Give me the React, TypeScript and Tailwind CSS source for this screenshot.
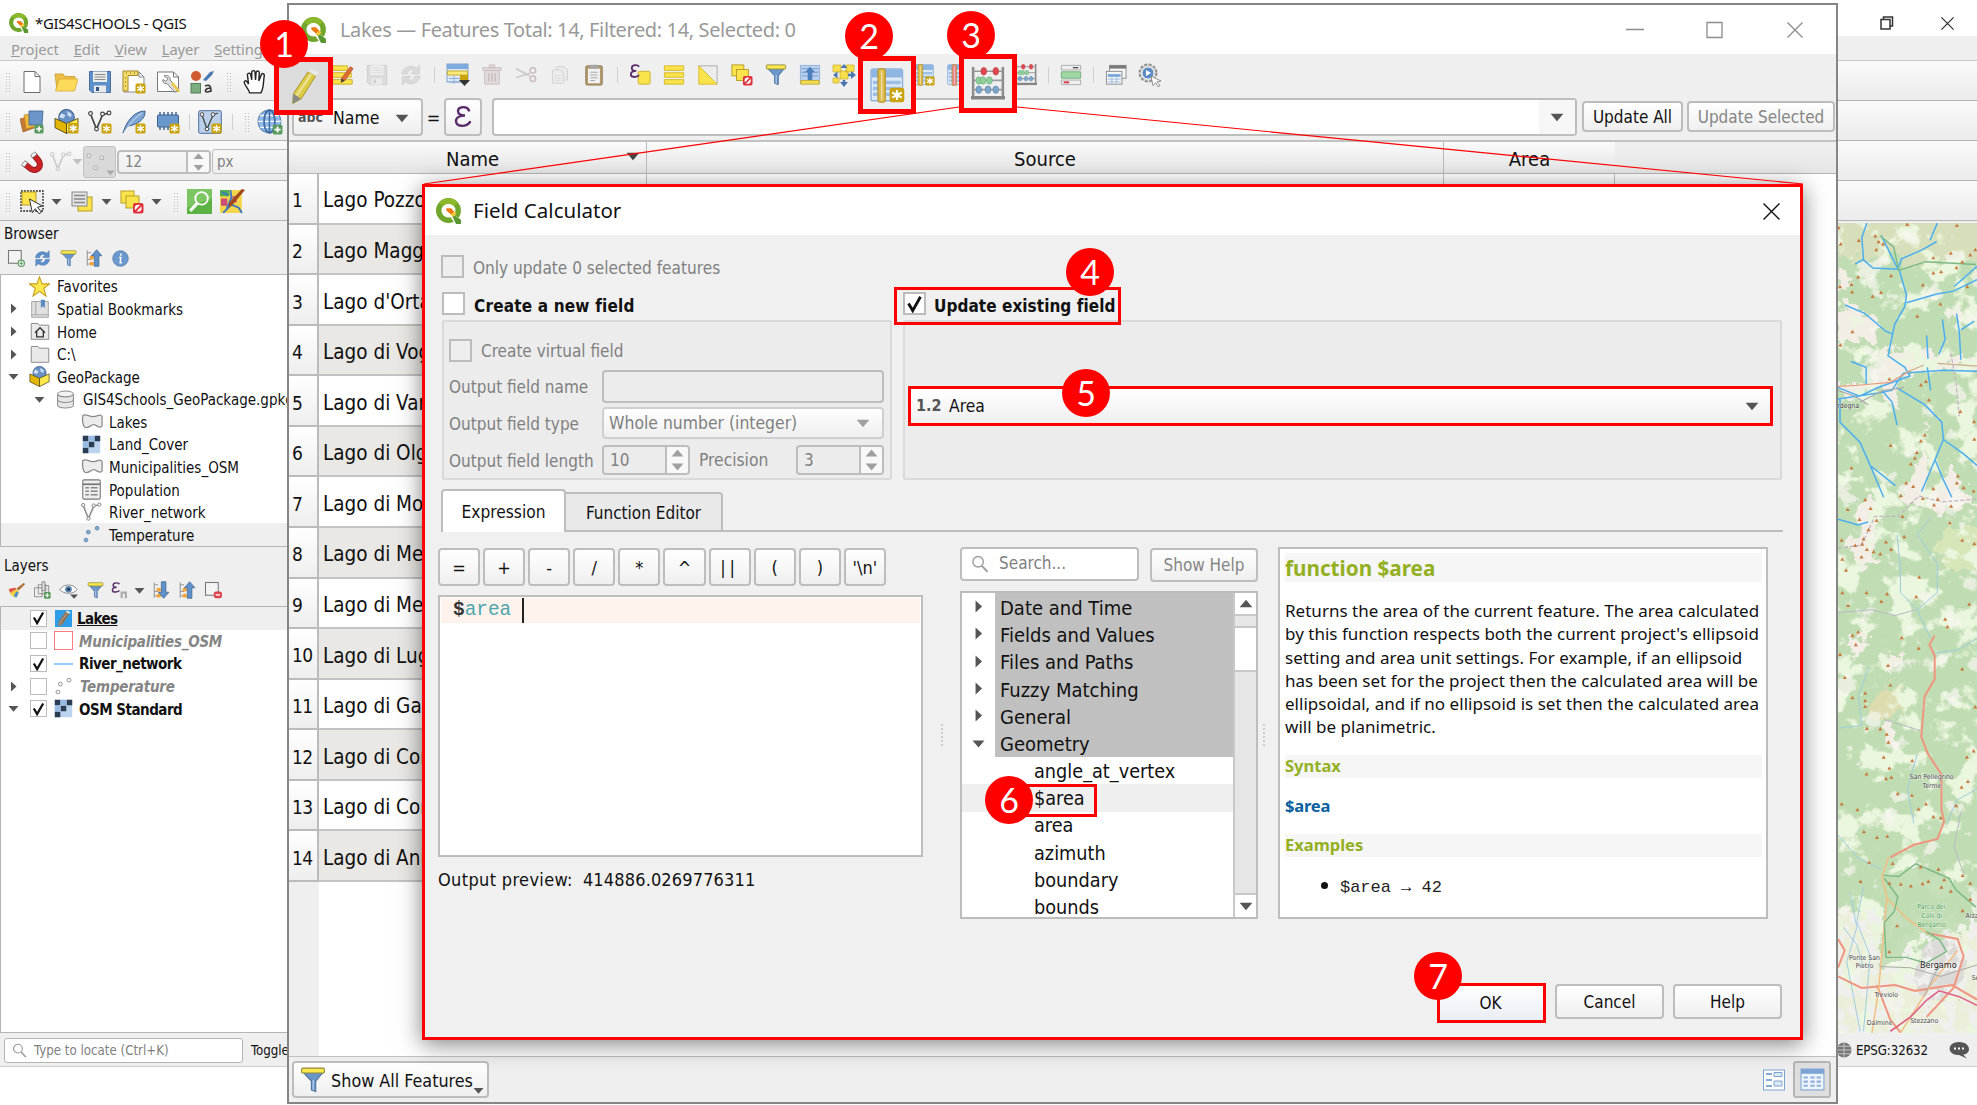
import React from "react";

type P = { children?: React.ReactNode; className?: string };
type IconProps = { s?: number };

const Svg = ({ s = 24, children }: { s?: number; children: React.ReactNode }) => (
  <svg width={s} height={s} viewBox="0 0 24 24" fill="none" className="shrink-0">
    {children}
  </svg>
);

/* ---------- shared drawings ---------- */

const QLogo = ({ s = 26 }: IconProps) => (
  <Svg s={s}>
    <circle cx="11.5" cy="11.5" r="9" stroke="#6fa62b" strokeWidth="5" />
    <path d="M4.6 6A9 9 0 0 1 18.5 6" stroke="#8cb82c" strokeWidth="5" />
    <path d="M12.5 12.5l10.5 7.5v4h-5l-6-8z" fill="#fff" />
    <path d="M13.5 13.500l9.500 6.500v4h-4.500z" fill="#589632" />
    <path d="M9.500 9.500h4.500l3 3.500-3 2.500-4.500-4z" fill="#ee7913" />
    <path d="M13.500 15.500l3.500-3 2 1.800-3.200 3.200z" fill="#f3c93a" />
  </Svg>
);

const Tri = ({ dir = "down", color = "#555", s = 11 }: { dir?: "down" | "right" | "up"; color?: string; s?: number }) => (
  <svg width={s} height={s} viewBox="0 0 11 11" className="shrink-0" fill={color}>
    {dir === "down" && <path d="M.5 3h10L5.500 8.800z" />}
    {dir === "up" && <path d="M.5 8h10L5.500 2.200z" />}
    {dir === "right" && <path d="M3 .5v10l5.500-5z" />}
  </svg>
);

const Star = () => (
  <>
    <rect x="13.500" y="13.500" width="10" height="10" rx="1.500" fill="#c9a20c" />
    <path d="M18.500 15v7M15.200 16.800l6.600 3.500M21.800 16.800l-6.600 3.500" stroke="#fff" strokeWidth="1.500" />
  </>
);
const Plus = () => (
  <>
    <rect x="14.500" y="14.500" width="9" height="9" rx="1.500" fill="#5a9a5e" />
    <path d="M19 16.200v5.600M16.200 19h5.600" stroke="#fff" strokeWidth="1.600" />
  </>
);
const Funnel = ({ s = 22 }: IconProps) => (
  <Svg s={s}>
    <path d="M2 4h20l-7.500 9v9.500l-4-1.500v-8z" fill="#6b96c9" stroke="#48709e" />
    <path d="M11.500 12v9l1.500.6V12z" fill="#a9c4e4" />
    <rect x="1.500" y="1" width="21" height="4.500" rx="1" fill="#fbe84a" stroke="#8f8a3c" />
  </Svg>
);
const Refresh = ({ s = 20, c = "#5b8fcb", edge = "#4d78ab" }: IconProps & { c?: string; edge?: string }) => (
  <Svg s={s}>
    <path d="M2 11C3 3 12 0 18 4.500L21.500 1v9.500H12l3.300-3.300c-3-2-6.300-1-7.300 3.800z" fill={c} stroke={edge} strokeWidth=".7" />
    <path d="M22 13c-1 8-10 11-16 6.500L2.500 23v-9.500H12l-3.300 3.300c3 2 6.300 1 7.300-3.800z" fill={c} stroke={edge} strokeWidth=".7" />
  </Svg>
);
const BlueArrow = ({ up }: { up?: boolean }) => (
  <Svg s={18}>
    <path d="M3 2v20M3 5h5M3 14h5M3 20h5" stroke="#999" strokeWidth="1.500" />
    <rect x="6" y="9" width="6" height="5" rx="2" fill="#f2a53a" />
    <rect x="6" y="17" width="6" height="5" rx="2" fill="#f2a53a" />
    {up ? (
      <path d="M15.500 1l7 8h-4v14h-6V9h-4z" fill="#5f92cc" stroke="#3d638e" />
    ) : (
      <path d="M15.500 23l7-8h-4V1h-6v14h-4z" fill="#5f92cc" stroke="#3d638e" />
    )}
  </Svg>
);
const GeoPkg = ({ s = 22, star }: IconProps & { star?: boolean }) => (
  <Svg s={s}>
    <circle cx="12" cy="8" r="7.500" fill="#6991c6" stroke="#3e5f8c" />
    <path d="M7 4l4 2-2 3-4-1zM13 2l4 3-1 3-3-2z" fill="#cfe0f2" />
    <path d="M1 9l11 5v9.500L1 18z" fill="#e2b600" stroke="#4a3f14" strokeWidth=".8" />
    <path d="M23 9l-11 5v9.500L23 18z" fill="#fbe94c" stroke="#4a3f14" strokeWidth=".8" />
    {star && <Star />}
  </Svg>
);
const Raster = () => (
  <Svg s={19}>
    <rect x="1" y="1" width="22" height="22" fill="#bcd3ef" />
    <path d="M1 1h7v7H1zM16 1h7v7h-7zM8.500 8.500h7v7h-7zM1 16h7v7H1z" fill="#2b3d52" />
    <path d="M8.500 1h7v7h-7zM1 8.500h7v7H1z" fill="#98bbe4" />
  </Svg>
);
const Poly = () => (
  <Svg s={22}>
    <path d="M2 5c4-3 7 2 12 1 4 0 7-4 9 0v10c-1 3-5 1-8-1-4-1-6 4-10 3-3-1-4-9-3-13z" fill="#ececec" stroke="#8b8b8b" strokeWidth="1.400" />
  </Svg>
);
const VLine = ({ c = "#444", star, s = 24 }: IconProps & { c?: string; star?: boolean }) => (
  <Svg s={s}>
    <path d="M2.500 4l6 15 6-14 6-2" stroke={c} strokeWidth="1.700" />
    {[[2.500, 3.500], [8.500, 19], [14.500, 4], [21, 3]].map(([x, y]) => (
      <circle key={x} cx={x} cy={y} r="1.900" fill="#f2f2f2" stroke={c} strokeWidth="1.100" />
    ))}
    {star && <Star />}
  </Svg>
);
const Dots = ({ c, f }: { c: string; f: string }) => (
  <Svg s={19}>
    <circle cx="5" cy="19" r="2.400" fill={f} stroke={c} />
    <circle cx="8" cy="9" r="2.400" fill={f} stroke={c} />
    <circle cx="19" cy="4" r="2.400" fill={f} stroke={c} />
  </Svg>
);
const Magnify = ({ s = 18 }: IconProps) => (
  <Svg s={s}>
    <circle cx="9.500" cy="9" r="7" stroke="#999" strokeWidth="1.800" />
    <path d="M14.500 14.500l7.500 8" stroke="#999" strokeWidth="2.400" />
  </Svg>
);
const Pencil = ({ s = 24, body = "#dccb45" }: IconProps & { body?: string }) => (
  <Svg s={s}>
    <path d="M15 2.500l5 2.500-9.500 15-5.500 3 .5-6.500z" fill={body} stroke="#a58e22" strokeWidth=".6" />
    <path d="M17 4l-9.500 14" stroke="#fff" strokeOpacity=".45" strokeWidth="1.400" />
    <path d="M5.300 16.500l5 3.500L5 23z" fill="#8a8a8a" />
    <path d="M15 2.500l2-1.800 5 2.500-2 2z" fill="#e9e9e9" />
  </Svg>
);
const Abacus = ({ s = 24 }: IconProps) => (
  <Svg s={s}>
    <path d="M1.500 0v22M22.500 0v22" stroke="#8d8d8d" strokeWidth="1.800" />
    <path d="M2 3h20M2 9.500h20M2 16h20" stroke="#9a9a9a" strokeWidth="1.200" />
    <path d="M0 20.500h24V23H0z" fill="#858585" />
    <g fill="#e0474f" stroke="#b9303a" strokeWidth=".4">
      <ellipse cx="9" cy="3" rx="2" ry="2.700" />
      <ellipse cx="17.500" cy="3" rx="2" ry="2.700" />
    </g>
    <g fill="#8fd09c" stroke="#62aa72" strokeWidth=".4">
      <ellipse cx="5.500" cy="9.500" rx="2" ry="2.600" />
      <ellipse cx="8.500" cy="9.500" rx="2" ry="2.600" />
      <ellipse cx="13" cy="9.500" rx="2" ry="2.600" />
    </g>
    <g fill="#7ba6ce" stroke="#54799c" strokeWidth=".4">
      <ellipse cx="5.500" cy="16" rx="2" ry="2.600" />
      <ellipse cx="12" cy="16" rx="2" ry="2.600" />
      <ellipse cx="17.500" cy="16" rx="2" ry="2.600" />
    </g>
  </Svg>
);
const NewField = ({ s = 24, bar = "#dcbb48", star = true }: IconProps & { bar?: string; star?: boolean }) => (
  <Svg s={s}>
    <rect x=".7" y=".7" width="21.600" height="21.800" rx="1.500" fill="#dce9f7" stroke="#8fb3da" />
    <path d="M1 1h21v5.500H1z" fill="#8fb6e2" />
    <path d="M2 10h19M2 14h19M2 18h19" stroke="#9dbfe6" strokeWidth="2.400" />
    <rect x="5.500" y=".5" width="5" height="23" rx="1.500" fill={bar} stroke="#b8942b" strokeWidth=".8" />
    <path d="M8 2v20" stroke="#fff" strokeOpacity=".5" />
    {star && <Star />}
  </Svg>
);

/* ---------- main toolbar drawings ---------- */

const PageIcon = () => (
  <Svg>
    <path d="M4 1.500h11l5 5v16H4z" fill="#fff" stroke="#6d6d6d" />
    <path d="M15 1.500v5h5" stroke="#6d6d6d" />
  </Svg>
);
const FolderIcon = () => (
  <Svg>
    <path d="M1 4h8l2 2.500h10V10H6L3 20z" fill="#edbf45" stroke="#c9992a" strokeWidth=".8" />
    <path d="M5 9h19l-3.500 12H1.500z" fill="#fddb5a" stroke="#d8a933" strokeWidth=".8" />
  </Svg>
);
const SaveIcon = ({ gray }: { gray?: boolean }) => (
  <Svg s={gray ? 22 : 24}>
    <path d="M1.500 1.500h21v21H4l-2.500-2.500z" fill={gray ? "#cfcfcf" : "#5f8fc8"} stroke={gray ? "#b8b8b8" : "#456d9e"} />
    <rect x="5" y="1.500" width="14" height="10.500" fill="#eee" />
    <path d="M6.500 4.500h11M6.500 7h11M6.500 9.500h11" stroke={gray ? "#ccc" : "#888"} />
    <rect x="6" y="15.500" width="12" height="7" fill="#e9e9e9" />
    <rect x="8" y="17" width="3" height="4" fill={gray ? "#bbb" : "#345780"} />
  </Svg>
);
const LayoutNew = () => (
  <Svg>
    <path d="M2 2h15l5 5v15H2z" fill="#fff" stroke="#888" />
    <path d="M17 2v5h5" stroke="#888" />
    <path d="M1 1h15v4.500H6V21H1z" fill="#f5dd6a" stroke="#a5852a" />
    <path d="M4 3h1M8 3h1M12 3h1M3 8h1M3 12h1M3 16h1" stroke="#6b571c" />
    <Star />
  </Svg>
);
const LayoutMgr = () => (
  <Svg>
    <path d="M1.500 2h16l5 5v14.500h-21z" fill="#fff" stroke="#777" />
    <path d="M17.500 2v5h5" stroke="#777" />
    <path d="M8 6c3-2 7 1 6 4l8 9-3 3.500-8-9c-3 1-5-2-4-4l3 2 2-3z" fill="#e0e0e0" stroke="#777" strokeWidth=".9" />
    <path d="M15 14l7 8.500 2-2-7-8.500z" fill="#ebc94a" />
  </Svg>
);
const StyleMgr = () => (
  <Svg>
    <circle cx="6" cy="6" r="5" fill="#cf5a2e" />
    <rect x="1" y="13.500" width="9.500" height="9.500" fill="#7dac7f" stroke="#527f55" />
    <path d="M13 10l7-8 4-1-2 4-6 6z" fill="#4878ad" />
    <path d="M15 16c5-2 6 0 6 6M21 18c-6 0-7 4-4 4s4-2 4-3" stroke="#333" strokeWidth="1.500" />
  </Svg>
);
const Hand = () => (
  <Svg s={26}>
    <path d="M7 22c-1-4-5-7-5-10 1-2 3-1 4 2L5 5c1-2 3-1 3 0l1 5V3c0-2 3-2 3 0l.5 7L13 3c1-2 3-1 3 .5L15.500 11 18 5c1-1.500 3-.5 2.500 1.500-1 5 0 10-3 15.500z" fill="#fff" stroke="#222" strokeWidth="1.300" />
  </Svg>
);
const DataSrc = () => (
  <Svg>
    <path d="M0 9l11-3 3 12-11 4z" fill="#c77934" stroke="#8f521d" strokeWidth=".6" />
    <path d="M4 5l12-2 2 13-12 3z" fill="#f0b83b" stroke="#a57a1d" strokeWidth=".6" />
    <path d="M9 1h14l-1 14H9z" fill="#6c96ca" stroke="#3e628f" strokeWidth=".8" />
    <Plus />
  </Svg>
);
const Feather = () => (
  <Svg>
    <path d="M1 23C4 12 12 1 23 1c1 8-8 14-17 15z" fill="#7ca5d4" stroke="#3d628f" />
    <path d="M2 22C8 13 14 7 20 3" stroke="#dcebfa" />
    <Star />
  </Svg>
);
const Chip = () => (
  <Svg>
    <path d="M4 2v18M8 2v18M12 2v18M16 2v18M20 2v18" stroke="#44688f" strokeWidth="1.500" />
    <rect x="1.500" y="5" width="21" height="12" rx="1" fill="#6a97cc" stroke="#3d628f" />
    <Star />
  </Svg>
);
const VLayer = () => (
  <Svg>
    <rect x=".7" y=".7" width="22.600" height="22.600" rx="1.500" fill="#b9cfea" stroke="#4c6f9c" />
    <path d="M4 5l5 14 6-14 5-2" stroke="#444" strokeWidth="1.300" />
    <circle cx="4" cy="4.500" r="1.800" fill="#fff" stroke="#444" />
    <circle cx="9" cy="19" r="1.800" fill="#fff" stroke="#444" />
    <circle cx="15" cy="4.500" r="1.800" fill="#fff" stroke="#444" />
    <Star />
  </Svg>
);
const Globe = () => (
  <Svg s={26}>
    <circle cx="11.500" cy="11.500" r="10.500" fill="#8fb9e8" stroke="#5d86b5" />
    <path d="M1 11.500h21M3 6h17M3 17h17" stroke="#fff" strokeWidth="1.200" />
    <ellipse cx="11.500" cy="11.500" rx="5" ry="10.500" stroke="#3f6aa0" strokeWidth="1.600" />
    <path d="M11.500 1v21" stroke="#3f6aa0" strokeWidth="1.400" />
    <Plus />
  </Svg>
);
const Magnet = () => (
  <Svg>
    <path d="M13.500 4.500l5 6c4.500 5.500-2 12-7.500 8.500l-7-5.500" stroke="#7f1113" strokeWidth="6" />
    <path d="M13.500 4.500l5 6c4.500 5.500-2 12-7.500 8.500l-7-5.500" stroke="#cb2325" strokeWidth="4.800" />
    <path d="M12.500 3.300l2.500 3M3 12.700l3 2.400" stroke="#777" strokeWidth="6" />
    <path d="M12.900 3.700l1.700 2.100M3.500 13l2.100 1.700" stroke="#fafafa" strokeWidth="4.600" />
  </Svg>
);
const SelectIcon = () => (
  <Svg>
    <rect x="1" y="1" width="22" height="20" fill="#eee" stroke="#222" strokeWidth="1.400" strokeDasharray="1.800 1.200" />
    <rect x="2" y="2" width="14" height="13" fill="#fbe34b" stroke="#b79d21" />
    <path d="M9.500 9l13 7-5 1.200 4 5-2.500 1.500-3.700-5-3 4z" fill="#fff" stroke="#333" />
  </Svg>
);
const FormSelect = () => (
  <Svg>
    <rect x="8" y="7" width="14" height="14" fill="#fbe34b" stroke="#b79d21" />
    <rect x="2" y="2" width="15" height="14" fill="#e3e3e3" stroke="#888" />
    <path d="M4 5.500h11M4 9h11M4 12.500h11" stroke="#888" strokeWidth="1.300" />
  </Svg>
);
const Deselect = ({ s = 24 }: IconProps) => (
  <Svg s={s}>
    <rect x="1" y="1" width="13" height="12" fill="#fbe34b" stroke="#b79d21" />
    <rect x="6" y="6" width="13" height="12" fill="#fbe34b" stroke="#b79d21" />
    <rect x="13" y="13" width="10.500" height="10.500" rx="2" fill="#e0333c" />
    <circle cx="18.200" cy="18.200" r="3.400" fill="#fff" />
    <path d="M15.500 21l5.500-5.500" stroke="#e0333c" strokeWidth="1.800" />
  </Svg>
);
const GreenSearch = () => (
  <Svg s={25}>
    <rect width="24" height="24" fill="#5cb343" />
    <path d="M0 0h24v9L0 18z" fill="#7cc563" />
    <circle cx="14" cy="9" r="6" stroke="#fff" strokeWidth="1.800" />
    <path d="M10 13.500l-7 7.500" stroke="#fff" strokeWidth="3" />
  </Svg>
);
const OsmEdit = () => (
  <Svg s={25}>
    <rect y="1" width="21" height="22" fill="#f4d64a" />
    <path d="M0 1h9v6H0z" fill="#4fae54" />
    <path d="M1 9h6v7H1zM12 7h4v6h-4z" fill="#c94c79" />
    <path d="M10 1l1 7-5 12M3 23l8-8 7 3 3 5M2 3l6 3" stroke="#3c74c4" strokeWidth="1.800" />
    <path d="M24 1L12 15l-4 3 1-5L21 0z" fill="#a1491d" />
  </Svg>
);
const NewBox = ({ minus }: { minus?: boolean }) => (
  <Svg s={18}>
    <rect x="2" y="2" width="17" height="17" fill="#f3f3f3" stroke="#777" strokeWidth="1.400" />
    {minus ? (
      <>
        <rect x="13" y="14" width="11" height="9" rx="3" fill="#e0444e" />
        <path d="M15.500 18.500h6" stroke="#fff" strokeWidth="1.800" />
      </>
    ) : (
      <>
        <circle cx="19" cy="19" r="4.200" fill="#fff" stroke="#5a9a5e" strokeWidth="1.600" />
        <path d="M19 16.500v5M16.500 19h5" stroke="#5a9a5e" strokeWidth="1.500" />
      </>
    )}
  </Svg>
);
const Info = () => (
  <Svg s={17}>
    <circle cx="12" cy="12" r="11" fill="#6b98cd" stroke="#4c75a6" />
    <path d="M12.500 5v3M10 10.500h2.500l-1 7.500H14" stroke="#fff" strokeWidth="2" />
  </Svg>
);
const StarIcon = () => (
  <Svg s={21}>
    <path d="M12 1l3 8h8.500l-6.700 5 2.600 9L12 17.500 4.600 23l2.600-9L.5 9H9z" fill="#fde94f" stroke="#c79a1b" strokeWidth="1.200" />
  </Svg>
);
const BookIcon = () => (
  <Svg s={20}>
    <path d="M2 3h20v19H2z" fill="#e0e0e0" stroke="#9b9b9b" />
    <path d="M7 3v16M2 19h20" stroke="#9b9b9b" />
    <path d="M13 1h5v10l-2.500-2.500L13 11z" fill="#5c8bc4" />
  </Svg>
);
const FolderGray = ({ home }: { home?: boolean }) => (
  <Svg s={20}>
    <path d="M1.500 3h8l1.500 2h11.500v17h-21z" fill="#e9e9e9" stroke="#8e8e8e" strokeWidth="1.200" />
    {home && <path d="M6 14l6-6 6 6M8 12.500V19h8v-6.500" stroke="#333" strokeWidth="1.600" />}
  </Svg>
);
const DbIcon = () => (
  <Svg s={19}>
    <path d="M2 5v14c0 5 20 5 20 0V5" fill="#e6e6e6" stroke="#8e8e8e" strokeWidth="1.300" />
    <ellipse cx="12" cy="5" rx="10" ry="3.700" fill="#f2f2f2" stroke="#8e8e8e" strokeWidth="1.300" />
    <path d="M2 12c0 5 20 5 20 0" stroke="#8e8e8e" strokeWidth="1.300" />
  </Svg>
);
const TableIcon = () => (
  <Svg s={21}>
    <rect x="2" y="1" width="20" height="22" rx="1.500" fill="#eee" stroke="#777" strokeWidth="1.200" />
    <path d="M2 6h20" stroke="#777" strokeWidth="2" />
    <path d="M5 10h4M11 10h8M5 14h4M11 14h8M5 18h4M11 18h8" stroke="#888" strokeWidth="1.700" />
  </Svg>
);
const Brush = () => (
  <Svg s={17}>
    <path d="M22.500 1l1.500 2-9 9-3-3z" fill="#ad6f33" />
    <path d="M1 10l9-2 6 6-4 8c-5 0-9-4-11-12z" fill="#f1cf3f" />
    <path d="M1 10l9-2 2 2-9 5z" fill="#e05252" />
    <path d="M8 20l4-7 3 2-3 7z" fill="#4a90d9" />
  </Svg>
);
const AddGroup = () => (
  <Svg s={18}>
    <path d="M2 9h10v12H2zM7 5h10v12H7z" fill="#eee" stroke="#777" />
    <path d="M12 1h4v12h-4zM16 6h5v10" stroke="#777" fill="#ddd" />
    <Plus />
  </Svg>
);
const Eye = () => (
  <Svg s={19}>
    <path d="M1 11c5-8 17-8 22 0-5 6-17 6-22 0z" fill="#fff" stroke="#888" strokeWidth="1.200" />
    <circle cx="12" cy="10.500" r="4.200" fill="#5884b5" />
    <circle cx="12" cy="10.500" r="1.600" fill="#222" />
    <path d="M14 17h10l-5 5.500z" fill="#555" />
  </Svg>
);

/* ---------- attribute table toolbar drawings ---------- */

const MultiEdit = () => (
  <Svg s={22}>
    <path d="M1 2h16v5H1zM1 9.500h20v5H1zM1 17h21v5H1z" fill="#fbe34b" stroke="#c9ae2d" />
    <path d="M20 3l3 2-9 13-4 2 .5-4.500z" fill="#e06b35" stroke="#9c3e14" strokeWidth=".7" />
    <path d="M10 15.500l4 2.500-4 2.500z" fill="#444" />
  </Svg>
);
const AddFeature = () => (
  <Svg>
    <rect x="1" y="1" width="21" height="18" fill="#dce8f6" stroke="#7ea4d0" />
    <path d="M1 1h21v5H1z" fill="#7faadb" />
    <path d="M1.500 8h20v4h-20z" fill="#fbe97a" stroke="#c9ae2d" />
    <path d="M3 15.500h11M3 19h11M8 13v8" stroke="#8fb0d8" />
    <path d="M14 12h8v5h-8z" fill="#c9a20c" />
    <path d="M13 17h11l-5.500 6z" fill="#333" />
  </Svg>
);
const Trash = () => (
  <Svg s={22}>
    <path d="M4 7h16v15H4z" fill="#e2dada" stroke="#c8bdbd" />
    <path d="M2 4h20v3H2zM9 1h6v3H9z" fill="#e2dada" stroke="#c8bdbd" />
    <path d="M8.500 10v9M12 10v9M15.500 10v9" stroke="#c8bdbd" strokeWidth="1.500" />
  </Svg>
);
const Cut = () => (
  <Svg s={22}>
    <path d="M1 5l15 8M1 15l15-5" stroke="#cdcdcd" strokeWidth="2" />
    <circle cx="19.500" cy="7" r="3" stroke="#c9bcbc" strokeWidth="1.600" />
    <circle cx="19.500" cy="16" r="3" stroke="#c9bcbc" strokeWidth="1.600" />
  </Svg>
);
const Copy = () => (
  <Svg s={20}>
    <path d="M8 2h9l4 4v12H8z" fill="#e9e9e9" stroke="#cfcfcf" />
    <path d="M3 6h9l4 4v12H3z" fill="#ededed" stroke="#cfcfcf" />
    <path d="M5 13h8M5 16h8M5 19h8" stroke="#d6d6d6" />
  </Svg>
);
const Paste = () => (
  <Svg s={22}>
    <rect x="3" y="2" width="18" height="21" rx="1.500" fill="#b39a6c" stroke="#8f7a55" />
    <rect x="5.500" y="5" width="13" height="16" fill="#f1f1f1" />
    <rect x="7.500" y=".7" width="9" height="4.500" rx="1" fill="#a5a5a5" />
    <path d="M8 9h8M8 12h8M8 15h8M8 18h5" stroke="#aaa" strokeWidth="1.200" />
  </Svg>
);
const Eps = ({ s = 24 }: IconProps) => (
  <Svg s={s}>
    <path d="M18 5.500c-2-5-11-4-11 .5 0 3 3 4.500 7 4.500-5 0-9 2-9 5.500 0 6 10 6.500 14 1" stroke="#5b2c6b" strokeWidth="2.400" strokeLinecap="round" />
  </Svg>
);
const EpsSelect = () => (
  <Svg s={22}>
    <rect x="10" y="8" width="13" height="14" rx="1.500" fill="#fbe34b" stroke="#c9ae2d" />
    <path d="M11 3c-2-3-8-2-8 1.500 0 2 2 3 5 3-4 0-6 1.500-6 4C2 15 8.500 15 11 12" stroke="#5b2c6b" strokeWidth="2" />
  </Svg>
);
const SelectAll = () => (
  <Svg s={22}>
    <path d="M1.500 2h21v5h-21zM1.500 9.500h21v5h-21zM1.500 17h21v5h-21z" fill="#fbe34b" stroke="#d6b92f" />
  </Svg>
);
const Invert = () => (
  <Svg s={22}>
    <path d="M2 2h20v20z" fill="#ececec" stroke="#aaa" />
    <path d="M2 2v20h20z" fill="#fbe34b" stroke="#d6b92f" />
  </Svg>
);
const MoveTop = () => (
  <Svg s={22}>
    <rect x="1.500" y="1.500" width="21" height="20" fill="#bad0ec" stroke="#8fb0d8" />
    <path d="M3 5h18M3 9h18M3 13h18" stroke="#84a9d6" strokeWidth="1.500" />
    <path d="M12 3l5.500 6h-3v9h-5V9h-3z" fill="#4b7fbd" />
    <path d="M2 18h20v4H2z" fill="#f2dc55" stroke="#c9ae2d" />
  </Svg>
);
const PanTo = () => (
  <Svg s={24}>
    <path d="M1 2h8v7H1zM14 2h8v7h-8zM8 8h8v8H8zM1 15h6v5H1z" fill="#f6df4b" stroke="#c9ae2d" strokeWidth=".7" />
    <path d="M12 1l3.500 4h-7zM12 24l4-5H8zM1 12l4.500-3.500v7zM24 12l-5-4v8z" fill="#4a76ab" />
    <path d="M12 17v3M16 12h4" stroke="#4a76ab" strokeWidth="2.500" />
  </Svg>
);
const CondFormat = () => (
  <Svg s={22}>
    <path d="M1.500 1.500h21v5h-21zM1.500 17.500h21v5h-21z" fill="#eee" stroke="#aaa" />
    <path d="M1.500 8.500h21v7h-21z" fill="#9fd8a5" stroke="#6eae76" />
    <path d="M14 4h6" stroke="#555" strokeWidth="1.500" />
    <path d="M4 20h6" stroke="#d9303b" strokeWidth="2" />
  </Svg>
);
const Dock = () => (
  <Svg s={22}>
    <rect x="5" y="1.500" width="18" height="14" fill="#f5f5f5" stroke="#8a8a8a" />
    <path d="M5 1.500h18v3.500H5z" fill="#777" />
    <rect x="1.500" y="8" width="17" height="14" fill="#f5f5f5" stroke="#8a8a8a" />
    <path d="M3 11h14v3H3z" fill="#79a6d9" />
    <path d="M3 16.500h14M3 19.500h14M7.500 14v8M12.500 14v8" stroke="#9dbde2" />
  </Svg>
);
const Actions = () => (
  <Svg s={24}>
    <circle cx="10" cy="10" r="8.500" fill="#d8d8d8" stroke="#8f8f8f" strokeWidth="2" strokeDasharray="3 1.500" />
    <circle cx="10" cy="10" r="6" fill="#5d8cc4" stroke="#eee" />
    <path d="M8 7l5 3-5 3z" fill="#fff" />
    <path d="M13 13l10 5-4 .7 3 4-2 1-2.500-4-2.500 3z" fill="#fff" stroke="#777" strokeWidth=".8" />
  </Svg>
);
const FormView = () => (
  <Svg s={24}>
    <rect x="1.500" y="2" width="21" height="20" fill="#fff" stroke="#7ea4d0" />
    <path d="M4 6h6M4 12h6M4 18h6" stroke="#5f8fc8" strokeWidth="1.600" />
    <path d="M12 4.500h8v4h-8zM12 13h8v5h-8z" fill="#dbe8f6" stroke="#7ea4d0" />
  </Svg>
);
const GridView = () => (
  <Svg s={25}>
    <rect x="1" y="2" width="22" height="20" fill="#eef4fb" stroke="#7ba3d3" />
    <path d="M1 2h22v4.500H1z" fill="#7ba3d3" />
    <path d="M3.500 10h4M10 10h4M16 10h4M3.500 14h4M10 14h4M16 14h4M3.500 18h4M10 18h4M16 18h4" stroke="#8db1dc" strokeWidth="2" />
  </Svg>
);

/* ---------- small building blocks ---------- */

const Grip = ({ className = "" }: P) => (
  <div className={`flex shrink-0 justify-center ${className}`}>
    <div className="h-5 w-[5px] bg-[radial-gradient(#bbb_0.8px,transparent_1px)] bg-[length:3px_3px]" />
  </div>
);
const Slot = ({ children, className = "w-[34px]" }: P) => (
  <div className={`flex shrink-0 items-center justify-center ${className}`}>{children}</div>
);
const Bar = ({ children }: P) => (
  <div className="flex h-10 shrink-0 items-center border-b border-[#b4b4b4] bg-linear-to-b from-[#fafafa] to-[#ececec] pt-[2px]">{children}</div>
);
const Sep = ({ className = "" }: P) => (
  <div className={`flex shrink-0 justify-center ${className}`}>
    <div className="h-4 w-px bg-[#cfcfcf]" />
  </div>
);
const Check = ({ on, disabled, s = 23 }: { on?: boolean; disabled?: boolean; s?: 17 | 23 }) => (
  <div
    className={`flex shrink-0 items-center justify-center border-[#bcbcbc] ${s === 17 ? "size-[17px] border" : "size-[23px] border-2"} ${disabled ? "bg-[#eee]" : "bg-white"}`}
  >
    {on && (
      <svg width={s === 17 ? 13 : 17} height={s === 17 ? 14 : 18} viewBox="0 0 14 15" fill="none">
        <path d="M2 7l3.500 6L12 1.500" stroke="#111" strokeWidth="2.400" />
      </svg>
    )}
  </div>
);
const Btn = ({ children, className = "" }: P) => (
  <div className={`flex shrink-0 items-center justify-center rounded-[4px] border-2 border-[#bdbdbd] bg-linear-to-b from-white to-[#efefef] ${className}`}>
    {children}
  </div>
);
const Badge = ({ children, className = "" }: P) => (
  <div
    className={`absolute flex size-[48px] items-center justify-center rounded-full bg-[#fe0000] font-[Lato] text-[34px] leading-none text-white ${className}`}
  >
    {children}
  </div>
);
const Spin = ({ v, s = 11, className = "" }: { v: string; s?: number; className?: string }) => (
  <div className={`flex shrink-0 items-stretch overflow-hidden rounded-[4px] border-2 border-[#bdbdbd] ${className}`}>
    <span className="flex flex-1 items-center pt-px pl-[6px] text-[#808080]">{v}</span>
    <div className="flex w-[23px] flex-col items-center justify-center border-l-2 border-[#bdbdbd] bg-[#f8f8f8]">
      <Tri dir="up" color="#a0a0a0" s={s} />
      <Tri color="#a0a0a0" s={s} />
    </div>
  </div>
);
const Cross = ({ s, color }: { s: number; color: string }) => (
  <svg width={s} height={s} viewBox="0 0 16 16" stroke={color} strokeWidth="1.300" fill="none">
    <path d="M.5.5l15 15M15.500.5l-15 15" />
  </svg>
);

/* ---------- main window, left side ---------- */

type Node = { t: string; icon: React.ReactNode; arrow?: "down" | "right"; level: 0 | 1 | 2; hl?: boolean };
const browser: Node[] = [
  { t: "Favorites", icon: <StarIcon />, level: 0 },
  { t: "Spatial Bookmarks", icon: <BookIcon />, arrow: "right", level: 0 },
  { t: "Home", icon: <FolderGray home />, arrow: "right", level: 0 },
  { t: "C:\\", icon: <FolderGray />, arrow: "right", level: 0 },
  { t: "GeoPackage", icon: <GeoPkg s={21} />, arrow: "down", level: 0 },
  { t: "GIS4Schools_GeoPackage.gpkg", icon: <DbIcon />, arrow: "down", level: 1 },
  { t: "Lakes", icon: <Poly />, level: 2 },
  { t: "Land_Cover", icon: <Raster />, level: 2 },
  { t: "Municipalities_OSM", icon: <Poly />, level: 2 },
  { t: "Population", icon: <TableIcon />, level: 2 },
  { t: "River_network", icon: <VLine s={21} c="#888" />, level: 2 },
  { t: "Temperature", icon: <Dots c="#5b86ae" f="#7fa8cf" />, level: 2, hl: true },
];

const LeftPanels = () => (
  <div className="flex w-[290px] shrink-0 flex-col overflow-hidden bg-[#efefef] text-[15px] whitespace-nowrap text-[#111]">
    <div className="flex h-6 items-center pt-[2px] pl-1">Browser</div>
    <div className="flex h-[29px] items-center pb-[3px] pl-[3px]">
      <Slot className="w-[26px]"><NewBox /></Slot>
      <Slot className="w-[26px]"><Refresh s={17} /></Slot>
      <Slot className="w-[26px]"><Funnel s={17} /></Slot>
      <Slot className="w-[26px]"><BlueArrow up /></Slot>
      <Slot className="w-[26px]"><Info /></Slot>
    </div>
    <div className="flex h-[273px] flex-col border border-[#b5b5b5] bg-white">
      {browser.map((n) => (
        <div
          key={n.t}
          className={`flex flex-1 items-center ${n.level === 1 ? "pl-[26px]" : n.level === 2 ? "pl-[52px]" : ""} ${n.hl ? "bg-[#efefef]" : ""}`}
        >
          <Slot className="w-[25px]">{n.arrow && <Tri dir={n.arrow} />}</Slot>
          <Slot className="w-[27px]">{n.icon}</Slot>
          <span className="pt-[3px] pl-[4px]">{n.t}</span>
        </div>
      ))}
    </div>
    <div className="flex h-[29px] items-end pl-1">Layers</div>
    <div className="flex h-[30px] items-center pb-[2px] pl-[3px]">
      <Slot className="w-[26px]"><Brush /></Slot>
      <Slot className="w-[26px]"><AddGroup /></Slot>
      <Slot className="w-[27px]"><Eye /></Slot>
      <Slot className="w-[26px]"><Funnel s={17} /></Slot>
      <Slot className="w-[22px]">
        <Svg s={17}>
          <path d="M12 3C9 0 3 1 3 4.500c0 2 2 3 5 3-4 0-6 1.500-6 4C2 15 9 15 12 12" stroke="#5b2c6b" strokeWidth="2" />
          <path d="M15 23v-8h6v8" stroke="#aaa" strokeWidth="3" />
        </Svg>
      </Slot>
      <Slot className="w-[18px]"><Tri /></Slot>
      <Slot className="w-[26px]"><BlueArrow /></Slot>
      <Slot className="w-[26px]"><BlueArrow up /></Slot>
      <Slot className="w-[26px]"><NewBox minus /></Slot>
    </div>
    <div className="flex flex-1 flex-col border border-[#b5b5b5] bg-white">
      <LayerRow on hl icon={<div className="size-[17px] bg-[#2f9cea]"><Pencil s={17} body="#8c6a55" /></div>}>
        <span className="font-bold tracking-[-0.6px] underline">Lakes</span>
      </LayerRow>
      <LayerRow icon={<div className="size-[19px] border-[1.5px] border-[#fb7b80]" />}>
        <span className="pl-[2px] font-bold tracking-[-0.25px] text-[#858585] italic">Municipalities_OSM</span>
      </LayerRow>
      <LayerRow on icon={<div className="h-[2px] w-[19px] bg-[#93d0fa]" />}>
        <span className="pl-[2px] font-bold tracking-[-0.5px]">River_network</span>
      </LayerRow>
      <LayerRow arrow="right" icon={<Dots c="#777" f="#fff" />}>
        <span className="pl-[3px] font-bold tracking-[-0.2px] text-[#858585] italic">Temperature</span>
      </LayerRow>
      <LayerRow arrow="down" on icon={<Raster />}>
        <span className="pl-[2px] font-bold tracking-[-0.5px]">OSM Standard</span>
      </LayerRow>
    </div>
  </div>
);
const LayerRow = ({ on, hl, arrow, icon, children }: { on?: boolean; hl?: boolean; arrow?: "down" | "right"; icon: React.ReactNode; children: React.ReactNode }) => (
  <div className={`flex h-[22.650px] shrink-0 items-center ${hl ? "bg-[#efefef]" : ""}`}>
    <Slot className="w-[25px]">{arrow && <Tri dir={arrow} />}</Slot>
    <Slot className="w-[25px]"><Check on={on} s={17} /></Slot>
    <Slot className="w-[25px]">{icon}</Slot>
    <span className="pt-[2px] pl-[1px]">{children}</span>
  </div>
);

/* ---------- map canvas ---------- */

const peaks = [
  [122, 76], [116, 48], [176, 70], [225, 62], [235, 72], [228, 86], [248, 76], [320, 42], [154, 146], [120, 150], [174, 133], [156, 159], [217, 167], [242, 160], [272, 131],
  [350, 201], [367, 147], [398, 100], [398, 126], [421, 124], [419, 180], [450, 92], [467, 117], [484, 107], [499, 150], [508, 95], [523, 86], [468, 44], [121, 251], [157, 228],
  [267, 310], [271, 425], [154, 464], [361, 320], [376, 314], [385, 346], [478, 366], [519, 384], [520, 414], [372, 407], [361, 417], [349, 437], [343, 447], [331, 457],
  [317, 490], [338, 496], [301, 512], [367, 517], [398, 500], [411, 518], [400, 528], [451, 530], [471, 478], [468, 490], [488, 498], [518, 504], [195, 519], [211, 534],
  [143, 536], [178, 553], [229, 555], [205, 571], [190, 587], [165, 598], [186, 596], [200, 605], [220, 609], [240, 613], [257, 592], [272, 605], [311, 583], [306, 548],
  [125, 589], [127, 622], [138, 641], [184, 618], [447, 559], [484, 589], [520, 595], [356, 653], [347, 687], [127, 680], [144, 702], [199, 680], [243, 695], [260, 682],
  [505, 700], [433, 726], [440, 739], [304, 758], [354, 776], [157, 754], [174, 748], [167, 770], [120, 787], [263, 806], [484, 812], [134, 827], [270, 840], [157, 862],
  [195, 854], [195, 867], [195, 877], [523, 878], [200, 915], [240, 916], [259, 925], [264, 939], [250, 965], [335, 971], [518, 954], [498, 965], [267, 984], [199, 994],
  [257, 1002], [273, 1000], [292, 1028], [334, 1031], [376, 1046], [354, 1055], [466, 1049], [482, 1017], [501, 1007], [398, 1068], [420, 1070], [125, 1046], [172, 1056],
  [191, 1094], [230, 1104], [261, 1102], [207, 1147], [277, 1149], [360, 1155], [413, 1159], [181, 1180], [267, 1183], [301, 1185], [331, 1188], [366, 1184], [383, 1180],
  [430, 1177], [422, 1190], [450, 1197], [485, 1170], [508, 1183], [508, 1211], [485, 1231], [290, 1257], [267, 1302],
];
const places: [number, number, string, string][] = [
  [112, 361, "rdegna", "#333"], [328, 1003, "San Pellegrino", "#444"], [366, 1018, "Terme", "#444"], [350, 1228, "Parco dei", "#3f9a4f"],
  [362, 1243, "Colli di", "#3f9a4f"], [351, 1259, "Bergamo", "#3f9a4f"], [494, 1243, "Alza", "#444"], [147, 1316, "Ponte San", "#444"], [167, 1331, "Pietro", "#444"],
  [223, 1381, "Treviolo", "#444"], [200, 1430, "Dalmine", "#444"], [329, 1425, "Stezzano", "#444"], [512, 1351, "Se", "#444"],
];

const MapView = () => (
  <svg width="139" height="810" viewBox="114 40 414 1403" preserveAspectRatio="none" fill="none" className="block">
    <defs>
      <filter id="light" x="0" y="0" width="100%" height="100%">
        <feTurbulence type="fractalNoise" baseFrequency="0.011 0.02" numOctaves="5" seed="7" />
        <feColorMatrix values="0 0 0 0 .83  0 0 0 0 .92  0 0 0 0 .73  12 0 0 0 -6.600" />
      </filter>
      <filter id="bare" x="0" y="0" width="100%" height="100%">
        <feTurbulence type="fractalNoise" baseFrequency="0.012 0.022" numOctaves="5" seed="21" />
        <feColorMatrix values="0 0 0 0 .94  0 0 0 0 .93  0 0 0 0 .88  14 0 0 0 -8.900" />
      </filter>
      <filter id="urban" x="0" y="0" width="100%" height="100%">
        <feTurbulence type="fractalNoise" baseFrequency="0.03 0.05" numOctaves="4" seed="4" />
        <feColorMatrix values="0 0 0 0 .86  0 0 0 0 .86  0 0 0 0 .85  10 0 0 0 -5" />
      </filter>
      <filter id="ragged" x="-5%" y="-5%" width="110%" height="110%">
        <feTurbulence type="fractalNoise" baseFrequency="0.03 0.05" numOctaves="4" seed="2" />
        <feDisplacementMap in="SourceGraphic" scale="45" xChannelSelector="R" yChannelSelector="G" />
      </filter>
    </defs>
    <rect x="114" y="40" width="414" height="1403" fill="#bfdcb2" />
    <g filter="url(#ragged)">
      <path d="M100 20h440v80l-82 10-110 10-60-30-90 20-98-20z" fill="#d6dfba" />
      <path d="M440 560l90 10v60l-60 20-70-50zM230 870l80-30-10 40-40 15-50-5z" fill="#d6e6b8" />
      <path d="M230 850l60-12 24 10-14 40-50 12-50-5z" fill="#dcdcae" />
      <g fill="#f2ede5">
        <path d="M114 180l50 0 30 20 50 20-30 30-40-5-60 0zM110 130l30-10 20 20-50 20zM430 190l50-12 10 20-50 14z" />
        <path d="M250 262l110-5 60 15 115 0v22l-190-3-60 30 10 50-30-10-20-30-50 0-80 10v-18l100-10z" />
        <path d="M375 390l-10 50-45 60-30 30 70 0 60 10 110-15-50-35-30-30-20 25-50 25z" />
        <path d="M170 525l40-10 25 30-15 40 10 45-30 10-70-40 50-20zM250 905l30 0 15 30-10 20-30-20zM140 770l50-20 15 15-40 25zM240 800l70-15 0 25-40 10z" />
      </g>
      <path d="M100 1230l140 0 10 75 100 20 90-50 100-20v203H100z" fill="#ebefd9" />
    </g>
    <rect x="114" y="40" width="414" height="1403" filter="url(#light)" />
    <rect x="114" y="40" width="414" height="1403" filter="url(#bare)" opacity=".7" />
    <path d="M370 1290l90-5 40 30-20 60-100 20-40-40z" fill="#dcdad6" filter="url(#ragged)" />
    <rect x="114" y="1230" width="414" height="213" filter="url(#urban)" />
    <path d="M250 1170l40-5 60-15 60 15 50 10 60 30-10 55-80 10-60 0-80 50-50 10z" fill="#bfdcb2" opacity=".85" filter="url(#ragged)" />
    <g stroke="#9fcde0" strokeWidth="1">
      <path vectorEffect="non-scaling-stroke" d="M290 580l10 60 0 40 50 30 40 50M390 550l-40 30 60 50 0 50-60 30M528 760l-60 20-70 5M205 810l-30 50 10 50-70 5M350 960l-30 60 20 60M528 1020l-60 20-30 40M114 1100l60 40 70 20M150 1200l20 60-30 60 40 120M190 1190l-20 60 40 60-20 130M130 1260l40 30 20 40" />
    </g>
    <path vectorEffect="non-scaling-stroke" stroke="#b9b9c4" d="M114 715l100-5 70 10 60-10M250 900l60 10 50 10M480 1060l-20 60 30 50" />
    <g stroke="#4aaef0" strokeWidth="1.500">
      <path vectorEffect="non-scaling-stroke" d="M200 40l-15 25 5 38-25 8M188 103l30 15 75 2-50-58M293 120l10-18 60-15 45-15M296 120l22 45-5 20-30 30-20 55 50 20 15 15-95 20-55 15-85-20M318 178l90-15 50-5 70-20M410 40l-22 30M460 150l68-35M135 182l60 15 60 30 20 5M425 207l8 35-18 25M467 197l8 30 5 50M480 225l40-15M378 235l4 40M153 280l45 10 0 30M288 325l85 30 50 30 5 30-25 35-40 55M428 415l60 25 40 20M403 450l25 35 25 30M380 290l10 40M120 345l0 40 60 35 30 40 40 55M210 460l75 35M114 553l60 10 30-5M245 330l30 20 15 40M114 345l115-10 45-5 35-30 120-5 99 2" />
    </g>
    <g strokeWidth="1.200">
      <path vectorEffect="non-scaling-stroke" stroke="#e79a7f" d="M114 323l60-2 95-5 60-20" />
      <path vectorEffect="non-scaling-stroke" stroke="#c8b08a" d="M410 283l118 5M320 298l50-12" />
      <path vectorEffect="non-scaling-stroke" stroke="#c3b3c3" strokeDasharray="4 2" d="M114 603l70-5 40-50 70 0 60-35 70 10 108-5M450 265l15 50 10 60" />
      <path vectorEffect="non-scaling-stroke" stroke="#aaa" d="M180 350l70-20 60-5M114 330l50 10 40 15" />
    </g>
    <g stroke="#f0957f" strokeWidth="2">
      <path vectorEffect="non-scaling-stroke" d="M402 755l-16 15 16 20 0 40-30 30-10 70 20 30 40 35 0 60 8 22-20 30-70 10-70 22" />
      <path vectorEffect="non-scaling-stroke" d="M114 1345l70 20 100-5 60 10 110-10 74 25M380 1270l90 10 18 30-30 55-80 50M230 1360l40 60 30 22M114 1280l20 20-20 30" />
    </g>
    <path vectorEffect="non-scaling-stroke" d="M265 1138l-20 35 15 35-10 60-15 100-20 75M260 1210l60 35 60 25M470 1300l-80 60-90 83" stroke="#f3bf85" strokeWidth="1.500" />
    <path vectorEffect="non-scaling-stroke" d="M270 1440l60-25 50-30 35-15 60 10 53 15" stroke="#df5f86" strokeWidth="1.600" />
    <path vectorEffect="non-scaling-stroke" d="M240 1328l90 2 90 15 108-20M370 1380l50-60" stroke="#a9a9a9" />
    <path vectorEffect="non-scaling-stroke" d="M250 1170l45 2 50-22 60 15 40 10 20 20 60 30M252 1175l40 32-10 25-30 20 5 60 60 0 60 10 60-20-20-20-40-15M240 62l40 20 15 40 80-15 150 5" stroke="#7cb884" strokeWidth="1.400" />
    <g fill="#c77a3e">
      {peaks.map(([x, y]) => (
        <path key={`${x}-${y}`} d={`M${x - 6} ${y + 3}l6-6 6 6z`} />
      ))}
    </g>
    {places.map(([x, y, t, c]) => (
      <text key={t} transform={`translate(${x} ${y}) scale(3 1.733)`} fill={c} fontSize="6.800" fontFamily="DejaVu Sans" stroke="#fff" strokeWidth="1" strokeOpacity=".6" paintOrder="stroke">
        {t}
      </text>
    ))}
    <text transform="translate(358 1330) scale(3 1.733)" fill="#222" fontSize="9" fontFamily="DejaVu Sans" stroke="#fff" strokeWidth="1" strokeOpacity=".6" paintOrder="stroke">
      Bergamo
    </text>
  </svg>
);

const MainWindow = () => (
  <div className="flex h-[1067px] flex-col bg-[#efefef]">
    <div className="flex h-9 shrink-0 items-center bg-white pl-[9px] font-['Noto_Sans'] text-[15px] tracking-[-0.35px] text-[#111]">
      <div className="flex w-[26px] pt-[9px]"><QLogo s={20} /></div>
      <span className="flex-1 pt-[11px]">*GIS4SCHOOLS - QGIS</span>
      <svg width="14" height="14" viewBox="0 0 14 14" className="mt-[10px] mr-[47px]" fill="none" stroke="#333" strokeWidth="1.500">
        <path d="M3.500 3V1h9v9h-2M1 3.500h9V13H1z" />
      </svg>
      <div className="mt-[10px] mr-[23px]"><Cross s={13} color="#222" /></div>
    </div>
    <div className="flex h-[25px] shrink-0 items-center gap-[15px] border-b border-[#c9c9c9] pt-[2px] pl-[11px] font-['Noto_Sans'] text-[14.800px] tracking-[-0.1px] text-[#999]">
      <span><u>P</u>roject</span><span><u>E</u>dit</span><span><u>V</u>iew</span><span><u>L</u>ayer</span><span><u>S</u>ettings</span>
    </div>
    <Bar>
      <Grip className="w-[15px]" />
      <Slot><PageIcon /></Slot><Slot><FolderIcon /></Slot><Slot><SaveIcon /></Slot><Slot><LayoutNew /></Slot><Slot><LayoutMgr /></Slot><Slot><StyleMgr /></Slot>
      <Grip className="w-[19px]" />
      <Slot><Hand /></Slot>
    </Bar>
    <Bar>
      <Grip className="w-[15px]" />
      <Slot><DataSrc /></Slot><Slot><GeoPkg s={25} star /></Slot><Slot><VLine star /></Slot><Slot><Feather /></Slot><Slot><Chip /></Slot>
      <Sep className="w-[8px]" />
      <Slot><VLayer /></Slot>
      <Sep className="w-[10px]" />
      <Grip className="w-[18px]" />
      <Slot className="w-[30px]"><Globe /></Slot>
    </Bar>
    <Bar>
      <Grip className="w-[15px]" />
      <Slot><Magnet /></Slot>
      <Slot className="w-[34px] opacity-30"><VLine s={22} c="#666" /><Tri /></Slot>
      <div className="flex h-8 w-[33px] items-end justify-end rounded-[3px] border border-[#c2c2c2] bg-[#d9d9d9]">
        <svg width="20" height="24" viewBox="0 0 20 24" className="mb-1" fill="#e6e6e6" stroke="#b5b5b5">
          <path d="M1 5h3.500v3.500H1zM14 7h3.500v3.500H14zM8 17h3.500v3.500H8z" />
        </svg>
        <Tri color="#aaa" s={9} />
      </div>
      <Spin v="12" className="ml-px h-[24px] w-[94px] text-[15px]" />
      <div className="ml-px flex h-[25px] w-[120px] items-center rounded-[3px] border border-[#bdbdbd] pt-px pl-1 text-[15px] text-[#808080]">px</div>
    </Bar>
    <Bar>
      <Grip className="w-[15px]" />
      <Slot><SelectIcon /></Slot><Slot className="w-[15px]"><Tri /></Slot>
      <Slot className="w-[36px]"><FormSelect /></Slot><Slot className="w-[12px]"><Tri /></Slot>
      <Slot className="w-[40px]"><Deselect /></Slot><Slot className="w-[8px]"><Tri /></Slot>
      <Grip className="w-[31px]" />
      <Slot className="w-[16px]"><GreenSearch /></Slot>
      <Slot className="w-[50px]"><OsmEdit /></Slot>
    </Bar>
    <div className="flex min-h-0 flex-1">
      <LeftPanels />
      <div className="flex-1" />
      <div className="w-[139px] pt-[2px]"><MapView /></div>
    </div>
    <div className="flex h-[34px] shrink-0 items-center border-b border-[#d0d0d0] pt-px pl-1 text-[13.200px]">
      <div className="flex h-[25px] w-[239px] items-center gap-[7px] rounded-[3px] border border-[#b5b5b5] bg-white pl-[7px] text-[#808080]">
        <Magnify s={15} /> <span className="pt-[2px]">Type to locate (Ctrl+K)</span>
      </div>
      <span className="flex-1 pt-[2px] pl-[8px]">Toggle</span>
      <Svg s={18}>
        <circle cx="12" cy="12" r="10" fill="#777" />
        <path d="M2 12h20M4 7h16M4 17h16M12 2v20" stroke="#ddd" />
      </Svg>
      <span className="pt-[2px] pl-[3px] text-[13.200px] tracking-[-0.1px]">EPSG:32632</span>
      <svg width="21" height="18" viewBox="0 0 21 18" className="mr-[7px] ml-[21px]">
        <path d="M10 1c12 0 13 12 4 12.500l4 4-8-3.500C-3 14-2 1 10 1z" fill="#555" />
        <path d="M5 7.500h2M9 7.500h2M13 7.500h2" stroke="#fff" strokeWidth="2" />
      </svg>
    </div>
  </div>
);

/* ---------- attribute table window ---------- */

const lakes = ["Lago Pozzo", "Lago Maggiore", "Lago d'Orta", "Lago di Vogorno", "Lago di Varese", "Lago di Olginate", "Lago di Monate", "Lago di Mergozzo", "Lago di Mezzola", "Lago di Lugano", "Lago di Garlate", "Lago di Como", "Lago di Comabbio", "Lago di Annone"];

const AttributeTable = () => (
  <div className="absolute top-[3px] left-[287px] flex h-[1101px] w-[1551px] flex-col border-2 border-[#858585] bg-[#efefef]">
    <div className="flex h-[49px] shrink-0 items-center bg-white pl-[12px] font-['Noto_Sans'] text-[20px] tracking-[-0.37px] text-[#999]">
      <QLogo />
      <span className="flex-1 pl-[13px]">Lakes — Features Total: 14, Filtered: 14, Selected: 0</span>
      <svg width="180" height="18" viewBox="0 0 180 18" fill="none" stroke="#8c8c8c" strokeWidth="1.300" className="mr-[31px]">
        <path d="M1 8.500h18M82 1.500h15v15H82zM162.500 1.500l15 15M177.500 1.500l-15 15" />
      </svg>
    </div>
    <div className="flex h-[44px] shrink-0 items-center pb-[3px] pl-[37px]">
      <Slot><MultiEdit /></Slot>
      <Slot className="w-[34px] opacity-60"><SaveIcon gray /></Slot>
      <Slot className="w-[34px] opacity-70"><Refresh s={22} c="#d2d2d2" edge="#bbb" /></Slot>
      <Sep className="w-[13px]" />
      <Slot><AddFeature /></Slot><Slot><Trash /></Slot><Slot><Cut /></Slot><Slot><Copy /></Slot><Slot><Paste /></Slot>
      <Sep className="w-[12px]" />
      <Slot><EpsSelect /></Slot><Slot><SelectAll /></Slot><Slot><Invert /></Slot><Slot><Deselect s={22} /></Slot><Slot><Funnel /></Slot><Slot><MoveTop /></Slot><Slot><PanTo /></Slot>
      <Sep className="w-[12px]" />
      <Slot /><Slot><NewField s={22} /></Slot><Slot><NewField s={22} bar="#e8838a" star={false} /></Slot><Slot><Abacus s={22} /></Slot><Slot><Abacus s={22} /></Slot>
      <Sep className="w-[11px]" />
      <Slot><CondFormat /></Slot>
      <Sep className="w-[11px]" />
      <Slot><Dock /></Slot><Slot><Actions /></Slot>
    </div>
    <div className="flex h-[42px] shrink-0 items-start text-[18px] whitespace-nowrap">
      <Btn className="ml-[3px] h-[38px] w-[131px] pt-px">
        <span className="w-[31px] pl-[4px] text-[14px] font-bold text-[#555]">abc</span>
        <span className="flex-1 pt-[2px] pl-[8px] text-[17.500px]">Name</span>
        <span className="pr-[12px]"><Tri s={14} /></span>
      </Btn>
      <span className="w-[21px] pt-[8px] text-center leading-6">=</span>
      <Btn className="h-[38px] w-[38px]"><Eps /></Btn>
      <div className="ml-[10px] flex h-[38px] w-[1085px] items-center justify-end rounded-[4px] border-2 border-[#bdbdbd] bg-white">
        <div className="flex h-full w-9 items-center justify-center bg-[#f7f7f7]"><Tri s={14} /></div>
      </div>
      <Btn className="mt-[3px] ml-[5px] h-[31px] w-[101px] pt-[3px] text-[17px]">Update All</Btn>
      <Btn className="mt-[3px] ml-[4px] h-[31px] w-[148px] pt-[3px] text-[17px] text-[#858585]">Update Selected</Btn>
    </div>
    <div className="flex h-[34px] shrink-0 items-center border-t-2 border-b border-t-[#c2c2c2] border-b-[#b4b4b4] bg-linear-to-b from-[#fbfbfb] to-[#e4e4e4] text-[20px] text-[#111]">
      <div className="flex h-full w-[358px] items-center border-r border-[#bbb]">
        <span className="flex-1 pt-[4px] pl-[10px] text-center">Name</span>
        <span className="-ml-5 pr-[6px] pb-[3px]"><Tri s={14} color="#444" /></span>
      </div>
      <div className="flex h-full w-[797px] items-center justify-center border-r border-[#bbb] pt-[4px]">Source</div>
      <div className="flex h-full w-[171px] items-center justify-center pt-[4px]">Area</div>
      <div className="h-full flex-1 bg-linear-to-b from-[#f0f0f0] to-[#e6e6e6]" />
    </div>
    <div className="flex min-h-0 flex-1 flex-col text-[20.500px] text-[#111]">
      {lakes.map((n, i) => (
        <div key={n} className="flex h-[50.570px] shrink-0">
          <div className="flex w-[30px] shrink-0 items-center border-r-2 border-b-2 border-[#bbb] bg-linear-to-b from-white to-[#eee] pt-[6px] pl-[3px] text-[19px] tracking-[-0.5px]">{i + 1}</div>
          <div className={`flex w-[1296px] border-r border-b-2 border-[#c4c4c4] ${i % 2 ? "bg-[#e9e8e4]" : "bg-white"}`}>
            <span className="flex w-[328px] items-center overflow-hidden border-r border-[#c4c4c4] pt-[6px] pl-[4px] whitespace-nowrap">{n}</span>
            <span className="w-[797px] border-r border-[#c4c4c4]" />
          </div>
          <div className="flex-1 bg-white" />
        </div>
      ))}
      <div className="flex flex-1">
        <div className="w-[30px]" />
        <div className="flex-1 bg-white" />
      </div>
    </div>
    <div className="flex h-[46px] shrink-0 items-center border-t border-[#c0c0c0] pr-[5px] pl-[3px]">
      <Btn className="h-[37px] w-[197px]">
        <div className="pl-[3px]"><Funnel s={26} /></div>
        <span className="pt-[3px] pl-[5px] text-[17.800px] whitespace-nowrap">Show All Features</span>
        <span className="self-end"><Tri /></span>
      </Btn>
      <div className="flex-1" />
      <FormView />
      <div className="ml-[7px] flex h-[37px] w-[38px] items-center justify-center rounded-[3px] border-2 border-[#b5b5b5] bg-[#dedede]"><GridView /></div>
    </div>
  </div>
);

/* ---------- field calculator dialog ---------- */

const groups = ["Date and Time", "Fields and Values", "Files and Paths", "Fuzzy Matching", "General", "Geometry"];
const funcs = ["angle_at_vertex", "$area", "area", "azimuth", "boundary", "bounds"];
const ops = ["=", "+", "-", "/", "*", "^", "||", "(", ")", "'\\n'"];

const HelpHead = ({ children, className = "" }: P) => (
  <div className={`flex items-center bg-[#f6f6f6] font-['Noto_Sans'] font-bold text-[#93b023] ${className}`}>{children}</div>
);

const Calculator = () => (
  <div className="absolute top-[184px] left-[422px] flex h-[856px] w-[1381px] flex-col border-[3px] border-[#fe0000] bg-[#f0f0f0] text-[17px] whitespace-nowrap text-[#111] shadow-[0_4px_22px_rgba(0,0,0,0.5)]">
    <div className="flex h-[48px] shrink-0 items-center bg-white pl-[11px] font-['Noto_Sans'] text-[20.500px] tracking-[0.02px]">
      <QLogo />
      <span className="flex-1 pl-[11px]">Field Calculator</span>
      <div className="mr-[20px]"><Cross s={17} color="#111" /></div>
    </div>
    <div className="flex items-center gap-[9px] pt-[20px] pl-[16px] leading-[23px] text-[#808080]">
      <Check disabled /> <span className="pt-[3px] text-[17.100px] leading-5">Only update 0 selected features</span>
    </div>
    <div className="flex pt-[14px] pl-[17px] font-bold">
      <div className="flex w-[461px] items-center gap-[9px] tracking-[0.18px]">
        <Check /> <span className="pt-[5px] leading-[18px]">Create a new field</span>
      </div>
      <div className="flex items-center gap-[8px] tracking-[0.05px]">
        <Check on /> <span className="pt-[5px] leading-[18px]">Update existing field</span>
      </div>
    </div>
    <div className="flex h-[165px] gap-[11px] pt-[5px] pl-[17px] text-[#808080]">
      <div className="flex h-[160px] w-[450px] flex-col rounded-[2px] border-2 border-[#dadada] bg-[#ececec] pt-[17px] pl-[5px]">
        <div className="flex items-center gap-[9px]"><Check disabled /> <span className="pt-[2px]">Create virtual field</span></div>
        <div className="mt-[8px] flex h-[32px] items-center">
          <span className="w-[153px] pt-[2px]">Output field name</span>
          <div className="h-[33px] w-[282px] rounded-[4px] border-2 border-[#bdbdbd]" />
        </div>
        <div className="mt-[5px] flex h-[32px] items-center">
          <span className="w-[153px] pt-[2px]">Output field type</span>
          <Btn className="h-[32px] w-[282px] border-[#cfcfcf]">
            <span className="flex-1 pt-[2px] pl-[5px] text-[17.400px]">Whole number (integer)</span>
            <span className="pr-[12px]"><Tri s={14} color="#a0a0a0" /></span>
          </Btn>
        </div>
        <div className="mt-[6px] flex h-[30px] items-center">
          <span className="w-[153px] pt-[2px]">Output field length</span>
          <Spin v="10" s={13} className="h-[30px] w-[88px]" />
          <span className="w-[106px] pt-[2px] pl-[9px] text-[17.300px]">Precision</span>
          <Spin v="3" s={13} className="h-[30px] w-[88px]" />
        </div>
      </div>
      <div className="flex h-[160px] w-[879px] flex-col rounded-[2px] border-2 border-[#dadada] bg-[#ececec] pt-[64px] pl-[3px] text-[#111]">
        <div className="flex h-[40px] w-[865px] items-center border-[3px] border-[#fe0000] bg-linear-to-b from-white to-[#efefef] pl-[5px]">
          <span className="w-[33px] text-[16px] font-bold text-[#555]">1.2</span>
          <span className="flex-1 pt-[2px] text-[17.300px]">Area</span>
          <span className="pr-[11px]"><Tri s={14} /></span>
        </div>
      </div>
    </div>
    <div className="flex h-[52px] items-end pt-[9px] pl-[16px]">
      <div className="flex h-[43px] w-[125px] items-center justify-center rounded-t-[4px] border-2 border-b-0 border-[#bdbdbd] bg-white pt-[3px] text-[17.200px]">Expression</div>
      <div className="flex h-[40px] w-[157px] items-center justify-center rounded-tr-[4px] border-y-2 border-r-2 border-[#bdbdbd] bg-[#e9e9e9] pt-[3px]">Function Editor</div>
      <div className="h-[2px] w-[1060px] bg-[#bdbdbd]" />
    </div>
    <div className="flex h-[389px] pt-[16px] pl-[13px]">
      <div className="flex w-[485px] flex-col">
        <div className="flex gap-[3px]">
          {ops.map((o) => (
            <Btn key={o} className={`h-[38px] w-[42.100px] pt-[2px] text-[18px] ${o === "||" ? "tracking-[4px]" : ""}`}>{o}</Btn>
          ))}
        </div>
        <div className="mt-[9px] h-[262px] border-2 border-[#bdbdbd] bg-white p-px">
          <div className="flex h-[25px] items-center bg-[#fdf2ec] pl-[12px] font-['Liberation_Mono'] text-[19.400px]">
            <span className="font-bold text-[#333]">$</span><span className="text-[#4ea5ad]">area</span>
            <span className="ml-[11px] h-full w-[2px] bg-[#222]" />
          </div>
        </div>
        <div className="flex gap-[10px] pt-[12px] text-[18px] tracking-[0.35px]"><span>Output preview:</span><span className="tracking-[0.150px]">414886.0269776311</span></div>
      </div>
      <div className="flex w-[37px] items-center justify-center"><div className="h-[22px] border-l-2 border-dotted border-[#ccc]" /></div>
      <div className="flex w-[298px] flex-col">
        <div className="-mt-px flex gap-[11px]">
          <div className="flex h-[34px] w-[180px] items-center gap-[10px] rounded-[4px] border-2 border-[#bdbdbd] bg-white pl-[9px] text-[#808080]"><Magnify /> Search...</div>
          <Btn className="mt-px h-[34px] w-[108px] pt-px text-[#858585]">Show Help</Btn>
        </div>
        <div className="mt-[9px] flex h-[328px] shrink-0 overflow-hidden border-2 border-[#bdbdbd] bg-white text-[20px]">
          <div className="flex flex-1 flex-col">
            {groups.map((g) => (
              <div key={g} className="flex h-[27.330px] shrink-0 items-center leading-none">
                <Slot className="w-[33px]"><Tri s={13} dir={g === "Geometry" ? "down" : "right"} /></Slot>
                <span className="flex h-full flex-1 items-center bg-[#c0c0c0] pt-[2px] pl-[5px]">{g}</span>
              </div>
            ))}
            {funcs.map((f) => (
              <div key={f} className={`flex h-[27.330px] shrink-0 items-center pt-[2px] pl-[72px] text-[19.700px] leading-none ${f === "$area" ? "bg-[#efefef]" : ""}`}>{f}</div>
            ))}
          </div>
          <div className="flex w-[23px] flex-col border-l-2 border-[#c8c8c8] bg-[#e6e6e6]">
            <div className="flex h-[23px] items-center justify-center border-b-2 border-[#c8c8c8] bg-white"><Tri s={14} dir="up" /></div>
            <div className="mt-[10px] h-[46px] border-y-2 border-[#c8c8c8] bg-white" />
            <div className="flex-1" />
            <div className="flex h-[24px] items-center justify-center border-t-2 border-[#c8c8c8] bg-white"><Tri s={14} /></div>
          </div>
        </div>
      </div>
      <div className="flex w-[20px] items-center justify-center pr-[8px]"><div className="h-[22px] border-l-2 border-dotted border-[#ccc]" /></div>
      <div className="-mt-px h-[372px] w-[490px] border-2 border-[#bdbdbd] bg-white pt-[4px] pr-[4px] pl-[5px]">
        <HelpHead className="h-[29px] pt-[3px] text-[20.700px]">function $area</HelpHead>
        <p className="pt-[17px] font-['Noto_Sans'] text-[17px] leading-[23.300px] tracking-[0.02px]">
          Returns the area of the current feature. The area calculated
          <br />by this function respects both the current project's ellipsoid
          <br />setting and area unit settings. For example, if an ellipsoid
          <br />has been set for the project then the calculated area will be
          <br />ellipsoidal, and if no ellipsoid is set then the calculated area
          <br />will be planimetric.
        </p>
        <HelpHead className="mt-[16px] h-[23px] text-[16.500px]">Syntax</HelpHead>
        <div className="pt-[16px] font-['Noto_Sans'] text-[16.500px] leading-[23px] font-bold tracking-[-0.2px] text-[#0a5fa0]">$area</div>
        <HelpHead className="mt-[17px] h-[23px] text-[16.500px]">Examples</HelpHead>
        <div className="flex items-center pt-[20px] pl-[36px] font-['Liberation_Mono'] text-[17px] tracking-[-0.02px] text-[#222]">
          <span className="mr-[12px] mb-[4px] size-[7px] rounded-full bg-[#111]" />
          $area → 42
        </div>
      </div>
    </div>
    <div className="flex flex-1 items-end justify-end gap-[9px] pr-[18px] pb-[14px]">
      <div className="flex h-[40px] w-[109px] items-center justify-center border-[3px] border-[#fe0000] bg-linear-to-b from-white to-[#e9eef4] pt-px pr-[2px]">OK</div>
      <Btn className="mb-[4px] h-[35px] w-[109px] pt-[2px]">Cancel</Btn>
      <Btn className="mb-[4px] h-[35px] w-[109px] pt-[2px]">Help</Btn>
    </div>
  </div>
);

/* ---------- numbered call-outs ---------- */

const Callouts = () => (
  <>
    <svg width="1977" height="200" viewBox="0 0 1977 200" className="absolute top-0 left-0" stroke="#fe0000" strokeWidth="1.200">
      <path d="M959 107L424 184M1017 107L1803 184" />
    </svg>
    <div className="absolute top-[57px] left-[274px] flex h-[58px] w-[59px] items-center justify-center border-[5px] border-[#fe0000] bg-[#dcdcdc]"><Pencil s={37} /></div>
    <div className="absolute top-[56px] left-[858px] flex h-[58px] w-[58px] items-center justify-center border-[5px] border-[#fe0000] bg-[#efefef]"><NewField s={35} /></div>
    <div className="absolute top-[54px] left-[959px] flex h-[59px] w-[58px] items-center justify-center border-[5px] border-[#fe0000] bg-[#efefef]"><Abacus s={34} /></div>
    <div className="absolute top-[287px] left-[894px] h-[38px] w-[227px] border-[3px] border-[#fe0000]" />
    <div className="absolute top-[784px] left-[1026px] h-[33px] w-[71px] border-[3px] border-[#fe0000]" />
    <Badge className="top-[20px] left-[260px]">1</Badge>
    <Badge className="top-[12px] left-[845px]">2</Badge>
    <Badge className="top-[11px] left-[947px]">3</Badge>
    <Badge className="top-[248px] left-[1066px]">4</Badge>
    <Badge className="top-[369px] left-[1062px]">5</Badge>
    <Badge className="top-[776px] left-[985px]">6</Badge>
    <Badge className="top-[952px] left-[1414px]">7</Badge>
  </>
);

export default function App() {
  return (
    <div className="relative h-[1105px] w-[1977px] overflow-hidden bg-white font-['DejaVu_Sans_Condensed','DejaVu_Sans',sans-serif] leading-tight text-[#111] [font-stretch:condensed]">
      <MainWindow />
      <AttributeTable />
      <Calculator />
      <Callouts />
    </div>
  );
}
